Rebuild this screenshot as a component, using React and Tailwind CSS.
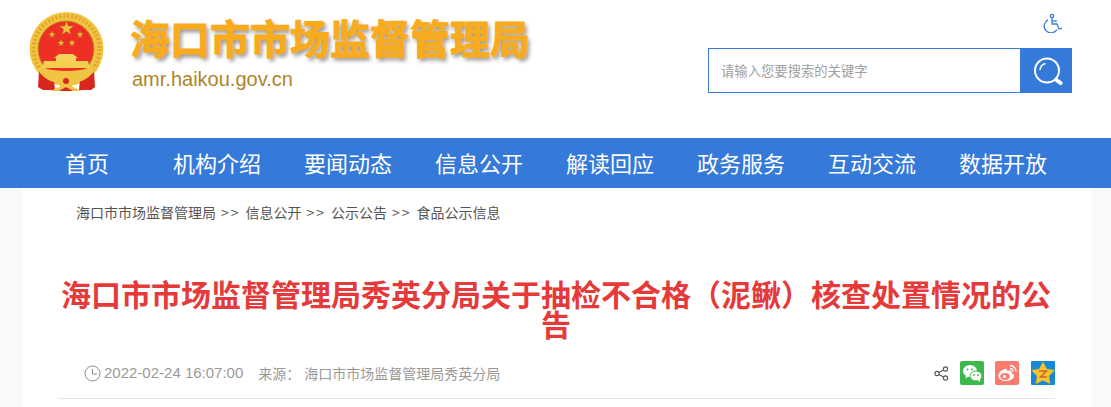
import React from 'react';

const cjk = "font-['Microsoft_YaHei','Noto_Sans_CJK_SC',sans-serif]";

const navItems = [
  { label: '首页', width: 'w-[108px]' },
  { label: '机构介绍', width: 'w-[131px]' },
  { label: '要闻动态', width: 'w-[131px]' },
  { label: '信息公开', width: 'w-[131px]' },
  { label: '解读回应', width: 'w-[131px]' },
  { label: '政务服务', width: 'w-[131px]' },
  { label: '互动交流', width: 'w-[131px]' },
  { label: '数据开放', width: 'w-[100px]' },
];

const crumbs = ['信息公开', '公示公告', '食品公示信息'];

const starPoints = (cx, cy, r, inner = 0.4) => {
  const pts = [];
  for (let i = 0; i < 10; i++) {
    const rad = i % 2 === 0 ? r : r * inner;
    const a = (Math.PI / 5) * i - Math.PI / 2;
    pts.push(`${(cx + rad * Math.cos(a)).toFixed(2)},${(cy + rad * Math.sin(a)).toFixed(2)}`);
  }
  return pts.join(' ');
};

function Emblem() {
  return (
    <svg width="78" height="84" viewBox="0 0 78 84" className="shrink-0">
      {/* gold wreath */}
      <circle cx="38.5" cy="38" r="37" fill="#f2c443" />
      <circle cx="38.5" cy="38" r="33" fill="none" stroke="#e2a62a" strokeWidth="4" strokeDasharray="2 2" />
      <circle cx="38" cy="38" r="28" fill="#ee2f25" stroke="#c98a1a" strokeWidth="1" />
      {/* stars */}
      <polygon points={starPoints(38.5, 17.5, 7.5)} fill="#f3c23a" stroke="#a8741a" strokeWidth="0.4" />
      <polygon points={starPoints(24, 23.5, 3.6)} fill="#f3c23a" stroke="#a8741a" strokeWidth="0.3" />
      <polygon points={starPoints(33, 32, 3.6)} fill="#f3c23a" stroke="#a8741a" strokeWidth="0.3" />
      <polygon points={starPoints(44, 32, 3.6)} fill="#f3c23a" stroke="#a8741a" strokeWidth="0.3" />
      <polygon points={starPoints(52, 23.5, 3.6)} fill="#f3c23a" stroke="#a8741a" strokeWidth="0.3" />
      {/* gate */}
      <path d="M26 47 L31 43 L45 43 L50 47 L48 47 L48 50 L28 50 L28 47 Z" fill="#f5d25c" />
      <path d="M16 50 L60 50 L62 57 L14 57 Z" fill="#f5cf4e" />
      <path d="M11 56 Q38 64 66 56 L66 62 Q38 70 11 62 Z" fill="#f2c443" />
      {/* ribbons */}
      <path d="M11 60 L26 69 L27 79 L15 79 L10 76 Z" fill="#d9261f" />
      <path d="M66 60 L52 69 L51 79 L63 79 L67 76 Z" fill="#d9261f" />
      <path d="M13 57 Q24 70 38 64 Q52 70 64 57 L66 61 Q52 76 38 70 Q24 76 11 61 Z" fill="#f2c443" />
      {/* wheel and knot */}
      <circle cx="38" cy="70" r="8" fill="#f2c443" />
      <circle cx="38" cy="70" r="3" fill="#d9261f" />
      <path d="M22 80 L38 73 L54 80 Z" fill="#f2c443" />
      <path d="M31 80 L38 76 L45 80 Z" fill="#d9261f" />
    </svg>
  );
}

function WheelchairIcon() {
  return (
    <svg width="20" height="20" viewBox="0 0 20 20" fill="none" stroke="#3a7cdc" strokeWidth="1.3">
      <circle cx="10" cy="3" r="1.7" />
      <path d="M10 5 L10 11 L15 11 L17 16 L20 15" />
      <path d="M10 8 L15 8" />
      <path d="M6 6.8 A6.9 6.9 0 1 0 15 16.5" />
    </svg>
  );
}

function SearchIcon() {
  return (
    <svg width="32" height="30" viewBox="0 0 32 30" fill="none">
      <circle cx="16" cy="14.5" r="12" stroke="white" strokeWidth="2" />
      <path d="M9 14 A7.5 7.5 0 0 1 14.5 7.5" stroke="white" strokeWidth="1.6" />
      <path d="M25.5 24 L29.5 27" stroke="white" strokeWidth="4" strokeLinecap="round" />
    </svg>
  );
}

function ClockIcon() {
  return (
    <svg width="17" height="17" viewBox="0 0 17 17" fill="none" stroke="#8a8a8a" strokeWidth="1">
      <circle cx="8.5" cy="8.5" r="7.5" />
      <path d="M8.5 4 L8.5 9 L13 9" />
    </svg>
  );
}

function ShareIcon() {
  return (
    <svg width="15" height="15" viewBox="0 0 15 15" fill="none" stroke="#555" strokeWidth="1.1">
      <circle cx="3" cy="7.5" r="2.1" />
      <circle cx="11.5" cy="3" r="2.1" />
      <circle cx="11.5" cy="12" r="2.1" />
      <path d="M5 6.5 L9.6 4 M5 8.5 L9.6 11" />
    </svg>
  );
}

function WechatIcon() {
  return (
    <svg width="24" height="24" viewBox="0 0 24 24">
      <rect width="24" height="24" rx="2" fill="#3cb94a" />
      <ellipse cx="10" cy="10" rx="7" ry="6" fill="white" />
      <path d="M6 14 L5.5 17.5 L9.5 15 Z" fill="white" />
      <ellipse cx="16" cy="15" rx="6" ry="5" fill="white" stroke="#3cb94a" strokeWidth="1" />
      <path d="M18 19 L20 21.5 L20 18 Z" fill="white" />
      <circle cx="7.5" cy="8.5" r="1" fill="#3cb94a" />
      <circle cx="12" cy="8.5" r="1" fill="#3cb94a" />
      <circle cx="14" cy="14" r="0.9" fill="#3cb94a" />
      <circle cx="18" cy="14" r="0.9" fill="#3cb94a" />
    </svg>
  );
}

function WeiboIcon() {
  return (
    <svg width="24" height="24" viewBox="0 0 24 24">
      <rect width="24" height="24" rx="2" fill="#f97c6f" />
      <path d="M10 8 C5 9.5 3 13 3.5 15.5 C4 19 8 20 11 20 C15 20 19 17.5 19 15 C19 13 17 12.5 16.5 12 C17 10.5 16.5 9 13.5 9.8 C12.5 10 12 10.3 12 9 C12 8 11.5 7.6 10 8 Z" fill="white" />
      <ellipse cx="10" cy="15.5" rx="4.8" ry="3.4" fill="#f97c6f" />
      <circle cx="9.5" cy="15.5" r="1.6" fill="white" />
      <path d="M15 4.5 A6 6 0 0 1 21 11 M15 7.5 A3 3 0 0 1 18 10.5" fill="none" stroke="white" strokeWidth="1.3" />
    </svg>
  );
}

function QzoneIcon() {
  return (
    <svg width="24" height="24" viewBox="0 0 24 24">
      <rect width="24" height="24" rx="1" fill="#1588d8" />
      <polygon points={starPoints(12, 13, 12, 0.52)} fill="#f8c72e" stroke="#eaa61c" strokeWidth="0.5" />
      <path d="M8 10 L15.5 10 L9.5 16 L16 16" fill="none" stroke="#d0662a" strokeWidth="1.6" />
    </svg>
  );
}

export default function App() {
  return (
    <div className={`h-[407px] overflow-hidden bg-[#f9f9f9] ${cjk}`}>
      {/* Header */}
      <header className="h-[138px] bg-white flex">
        <div className="pl-[28px] pt-[11px]">
          <Emblem />
        </div>
        <div className="pl-[26px] pt-[15px] w-[602px]">
          <div className="text-[40px] leading-[44px] font-bold text-[#f8ab1c] [-webkit-text-stroke:1px_#f8ab1c] [text-shadow:2px_3px_4px_rgba(0,0,0,0.45)] whitespace-nowrap -ml-[2px]">
            海口市市场监督管理局
          </div>
          <div className="mt-[8px] text-[20px] leading-[24px] text-[#b0842a] font-['Liberation_Sans',sans-serif]">
            amr.haikou.gov.cn
          </div>
        </div>
        <div className="flex flex-col items-end w-[364px]">
          <div className="h-[48px] pt-[13px] pr-[10px]">
            <WheelchairIcon />
          </div>
          <div className="flex w-full h-[45px]">
            <div className="flex-1 border border-[#3a7cdc] flex items-center pl-[12px] text-[13.33px] text-[#a0a0a0]">
              请输入您要搜索的关键字
            </div>
            <div className="w-[51px] bg-[#357ad9] flex items-center justify-center">
              <SearchIcon />
            </div>
          </div>
        </div>
      </header>

      {/* Nav */}
      <nav className="h-[50px] bg-[#357ad9] flex items-center pl-[65px] pb-[2px] text-[22px] text-white whitespace-nowrap">
        {navItems.map((item) => (
          <a key={item.label} className={item.width}>{item.label}</a>
        ))}
      </nav>

      {/* Article */}
      <main className="mx-[22px] w-[1070px] h-[219px] bg-white">
        <div className="pl-[54px] pt-[15px] flex text-[14px] leading-[18px] text-[#555555] whitespace-nowrap">
          <span>海口市市场监督管理局</span>
          {crumbs.map((crumb) => (
            <React.Fragment key={crumb}>
              <span className="w-[29.5px] text-center tracking-[2px]">{'>>'}</span>
              <span>{crumb}</span>
            </React.Fragment>
          ))}
        </div>
        <div className="mx-[37px] w-[996px]">
          <h1 className="mt-[57px] pr-[2px] text-[30px] leading-[30px] font-bold text-[#e63a3a] text-center break-all">
            海口市市场监督管理局秀英分局关于抽检不合格（泥鳅）核查处置情况的公告
          </h1>
          <div className="mt-[17px] h-[44px] pt-[6px] flex items-start border-b border-[#e5e5e5] text-[14px] text-[#999999]">
            <div className="h-[24px] pl-[25px] flex items-center gap-[3px]">
              <ClockIcon />
              <span className="text-[15px] font-['Liberation_Sans',sans-serif]">2022-02-24 16:07:00</span>
            </div>
            <span className="h-[24px] leading-[24px] ml-[15px] whitespace-nowrap">来源：</span>
            <span className="h-[24px] leading-[24px] ml-[4px] whitespace-nowrap">海口市市场监督管理局秀英分局</span>
            <div className="ml-auto flex items-center">
              <ShareIcon />
              <span className="ml-[11px]"><WechatIcon /></span>
              <span className="ml-[11px]"><WeiboIcon /></span>
              <span className="ml-[12px]"><QzoneIcon /></span>
            </div>
          </div>
        </div>
      </main>
    </div>
  );
}
